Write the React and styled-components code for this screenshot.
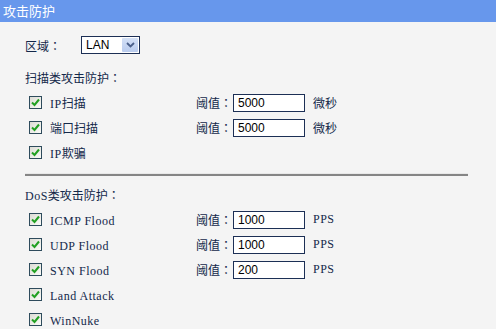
import React from 'react';
import styled, { createGlobalStyle } from 'styled-components';

const GlobalStyle = createGlobalStyle`
  html, body {
    margin: 0;
    padding: 0;
    background: #f4f4f4;
  }
  body {
    font-family: "Noto Sans CJK SC", "Liberation Sans", sans-serif;
    font-size: 12px;
    color: #13284a;
  }
`;

const scanRows = [
  { name: 'IP扫描', latin: 'IP', cn: '扫描', value: '5000', unit: '微秒' },
  { name: '端口扫描', cn: '端口扫描', value: '5000', unit: '微秒' },
  { name: 'IP欺骗', latin: 'IP', cn: '欺骗' },
];

const dosRows = [
  { latin: 'ICMP Flood', value: '1000', unit: 'PPS' },
  { latin: 'UDP Flood', value: '1000', unit: 'PPS' },
  { latin: 'SYN Flood', value: '200', unit: 'PPS' },
  { latin: 'Land Attack' },
  { latin: 'WinNuke' },
];

const Check = () => (
  <CheckBox>
    <svg width="9" height="9" viewBox="0 0 9 9">
      <path d="M1 4.5 L3.5 7 L8 1.5" fill="none" stroke="#22a022" strokeWidth="2" />
    </svg>
  </CheckBox>
);

const Row = ({ row }) => (
  <OptionRow>
    <Check />
    <Label>
      {row.latin && <Latin>{row.latin}</Latin>}
      {row.cn}
    </Label>
    {row.value ? (
      <>
        <span>
          阈值<Colon>：</Colon>
        </span>
        <Input defaultValue={row.value} />
        <Unit $latin={row.unit === 'PPS'}>{row.unit}</Unit>
      </>
    ) : null}
  </OptionRow>
);

export default function App() {
  return (
    <Page>
      <GlobalStyle />
      <Header>攻击防护</Header>
      <Content>
        <ZoneRow>
          <span>
            区域<Colon>：</Colon>
          </span>
          <Select>
            <SelectText>LAN</SelectText>
            <SelectButton>
              <svg width="9" height="6" viewBox="0 0 9 6">
                <path d="M1 1 L4.5 4.5 L8 1" fill="none" stroke="#4a5f8a" strokeWidth="1.8" />
              </svg>
            </SelectButton>
          </Select>
        </ZoneRow>
        <SectionTitle>
          扫描类攻击防护<Colon>：</Colon>
        </SectionTitle>
        {scanRows.map((r) => (
          <Row key={r.name} row={r} />
        ))}
        <Divider />
        <SectionTitle $dos>
          <Latin>DoS</Latin>类攻击防护<Colon>：</Colon>
        </SectionTitle>
        {dosRows.map((r) => (
          <Row key={r.latin} row={r} />
        ))}
      </Content>
    </Page>
  );
}

const Page = styled.div`
  width: 496px;
  height: 329px;
  overflow: hidden;
  background: #f4f4f4;
`;

const Header = styled.div`
  height: 22px;
  line-height: 21px;
  padding-left: 3px;
  background: #6797ec;
  color: #fff;
  font-size: 13px;
`;

const Content = styled.div`
  padding: 10px 0 0 25px;
`;

const ZoneRow = styled.div`
  display: flex;
  align-items: center;
  height: 26px;
  gap: 20px;
`;

const Colon = styled.span`
  font-family: "Noto Sans CJK TC", "Noto Sans CJK SC", sans-serif;
`;

const Select = styled.div`
  display: flex;
  align-items: center;
  width: 52px;
  height: 16px;
  border: 1px solid #1c2f55;
  background: #fff;
  padding: 0 1px 0 4px;
`;

const SelectText = styled.span`
  flex: 1;
  font-family: "Liberation Sans", Arial, sans-serif;
  font-size: 12px;
  color: #000;
`;

const SelectButton = styled.span`
  display: flex;
  align-items: center;
  justify-content: center;
  width: 16px;
  height: 14px;
  background: linear-gradient(#d4e0f6, #b9cbee);
  border-radius: 1px;
`;

const SectionTitle = styled.div`
  height: 24px;
  line-height: 24px;
  margin-top: ${({ $dos }) => ($dos ? '7px' : '8px')};
`;

const OptionRow = styled.div`
  display: grid;
  grid-template-columns: 21px 146px 37px 80px auto;
  align-items: center;
  height: 25px;
  padding-left: 4px;
`;

const CheckBox = styled.span`
  display: flex;
  align-items: center;
  justify-content: center;
  width: 11px;
  height: 11px;
  border: 1px solid #2e4b5c;
  background: linear-gradient(135deg, #dcdcd4, #fbfbf8);
`;

const Label = styled.span`
  white-space: nowrap;
`;

const Latin = styled.span`
  font-family: "Liberation Serif", "Times New Roman", serif;
  font-size: 12px;
  letter-spacing: 0.5px;
`;

const Input = styled.input`
  box-sizing: border-box;
  width: 72px;
  height: 18px;
  border: 1px solid #1c2f55;
  background: #fff;
  padding: 0 0 0 4px;
  font-family: "Liberation Sans", Arial, sans-serif;
  font-size: 12px;
  color: #000;
  outline: none;
`;

const Unit = styled.span`
  font-family: ${({ $latin }) =>
    $latin ? '"Liberation Serif", serif' : 'inherit'};
  font-size: 12px;
  letter-spacing: ${({ $latin }) => ($latin ? '0.5px' : '0')};
`;

const Divider = styled.div`
  width: 443px;
  height: 2px;
  margin-top: 8px;
  background: #858585;
  border-top: 1px solid #e8e8e8;
  box-sizing: content-box;
`;
